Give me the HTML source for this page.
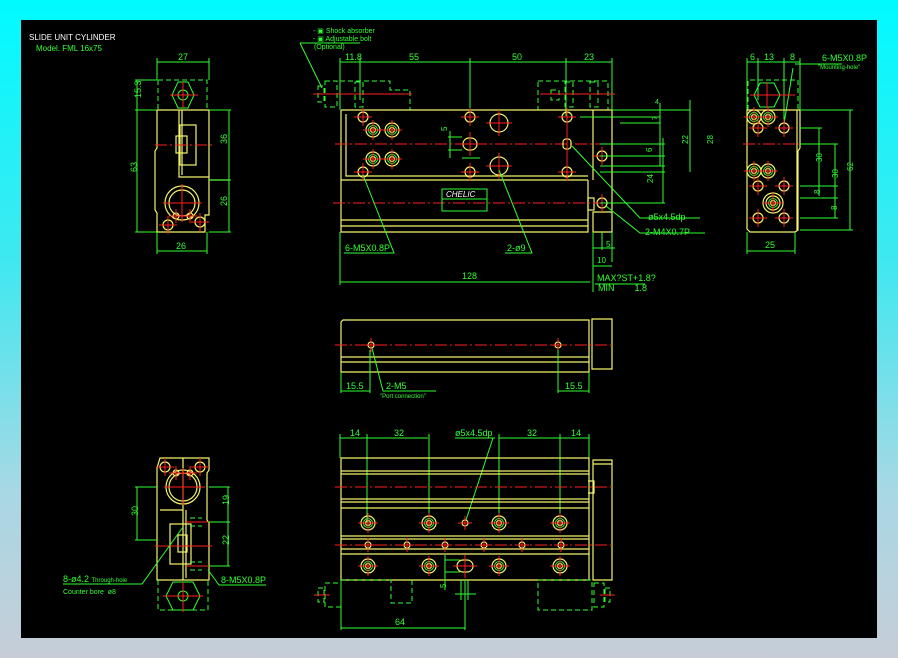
<!DOCTYPE html>
<html><head><meta charset="utf-8"><style>
html,body{margin:0;padding:0;}
body{width:898px;height:658px;overflow:hidden;background:linear-gradient(180deg,#00fbff 0%,#40e8f0 40%,#a8d8e4 75%,#c6cdd8 100%);position:relative;font-family:"Liberation Sans",sans-serif;}
#cad{position:absolute;left:21px;top:20px;width:856px;height:618px;background:#000;}
svg{position:absolute;left:0;top:0;}
text{font-family:"Liberation Sans",sans-serif;font-size:9px;fill:#30ff30;}
.y{stroke:#f4f46c;fill:none;stroke-width:1.2}
.g{stroke:#30ff30;fill:none;stroke-width:1}
.d{stroke:#30ff30;fill:none;stroke-width:1;stroke-dasharray:5 3}
.r{stroke:#ff2020;fill:none;stroke-width:1;stroke-dasharray:12 3 2 3}
.rs{stroke:#ff2020;fill:none;stroke-width:1}
</style></head><body>
<div id="cad"></div>
<svg width="898" height="658" viewBox="0 0 898 658">
<defs>
<g id="hA"><circle r="7" class="y"/><circle r="4.5" class="g" stroke-width="1.5"/><circle r="2.5" class="y"/><path class="rs" d="M-10 0H10M0-10V10"/></g>
<g id="hB"><circle r="5" class="y"/><path class="rs" d="M-9 0H9M0-9V9"/></g>
<g id="hS"><circle r="3" class="y"/><path class="rs" d="M-7 0H7M0-7V7"/></g>
<g id="hL"><circle r="9" class="y"/><path class="rs" d="M-13 0H13M0-13V13"/></g>
</defs>

<!-- title -->
<text x="29" y="40" style="fill:#fff;font-size:8px">SLIDE UNIT CYLINDER</text>
<text x="36" y="51" style="font-size:8px">Model. FML 16x75</text>

<!-- ===== Top-left side view ===== -->
<path class="g" d="M157 62H209M157 58V80M209 58V80"/><text x="178" y="60">27</text>
<path class="g" d="M135 80H157M135 110H157M135 232H157M137 80V232"/>
<text x="134" y="105" transform="rotate(-90 134 98)">15.3</text>
<text x="134" y="175" transform="rotate(-90 134 172)">63</text>
<path class="d" d="M158 80H207V110M158 80V110"/>
<path class="g" d="M172 95l6-13h10l6 13-6 13h-10z"/><circle cx="183" cy="95" r="5" class="g"/>
<path class="rs" d="M170 95H198M183 82V108"/>
<path class="y" d="M157 110H209V180H229M157 110V148l-2 3V210l2 3V232H205V215h4V180"/>
<path class="y" d="M179 110V177H209M182 110V175"/>
<rect x="180" y="125" width="16" height="40" class="y"/><rect x="176" y="136" width="11" height="17" class="y"/>
<path class="r" d="M155 145H212"/>
<circle cx="182" cy="203" r="17" class="y"/><circle cx="182" cy="203" r="13" class="y"/>
<path class="rs" d="M163 203H202M182 184V222"/>
<use href="#hS" x="176" y="216"/><use href="#hS" x="190" y="216"/><use href="#hB" x="168" y="225"/><use href="#hB" x="200" y="222"/>
<path class="g" d="M209 110H231M209 180H231M209 232H231M229 110V232"/>
<text x="224" y="147" transform="rotate(-90 224 144)">36</text>
<text x="224" y="209" transform="rotate(-90 224 206)">26</text>
<path class="g" d="M157 232V254M207 232V254M157 251H207"/><text x="176" y="249">26</text>

<!-- ===== Top main view ===== -->
<text x="313" y="33" style="font-size:7px">- ▣ Shock absorber</text>
<text x="313" y="41" style="font-size:7px">- ▣ Adjustable bolt</text>
<text x="314" y="49" style="font-size:7px">(Optional)</text>
<path class="g" d="M300 43H360M300 43L322 88"/>
<path class="g" d="M340 62H612M340 58V110M360 58V100M470 58V116M566 58V116M612 58V110"/>
<text x="345" y="60">11.8</text><text x="409" y="60">55</text><text x="512" y="60">50</text><text x="584" y="60">23</text>
<path class="d" d="M318 86h6v16h-6zM325 81h12v26h-12zM340 81h50v9h20v20h-20M355 82h8v25h-8zM538 81h70v29h-70z M551 90h8v10h-8z M565 82h8v25h-8zM590 82h8v25h-8z"/>
<path class="rs" d="M313 94H412M540 94H615"/>
<path class="y" d="M341 110H612V210M341 110V180H588M341 180V232H588V180M593 110V180M346 114V176H588M341 220H588M341 226H588M593 212H612V232H593z"/>
<rect x="588" y="198" width="6" height="12" class="y"/>
<path class="r" d="M335 144H615M333 203H616"/>
<use href="#hB" x="363" y="117"/><use href="#hA" x="373" y="130"/><use href="#hA" x="392" y="130"/>
<use href="#hA" x="373" y="159"/><use href="#hA" x="392" y="159"/><use href="#hB" x="363" y="172"/>
<use href="#hB" x="470" y="117"/><use href="#hB" x="470" y="172"/>
<rect x="463" y="138" width="14" height="12" rx="6" class="y"/><path class="rs" d="M470 132V156M459 144H481"/>
<use href="#hL" x="499" y="123"/><use href="#hL" x="499" y="166"/>
<use href="#hB" x="567" y="117"/><use href="#hB" x="567" y="172"/><rect x="563" y="139" width="8" height="10" rx="3" class="y"/>
<path class="rs" d="M567 125V164"/>
<use href="#hB" x="602" y="156"/><use href="#hB" x="602" y="203"/>
<path class="g" d="M450 131V158M448 137H462M448 150H462M462 158H480"/><text x="444" y="134" transform="rotate(-90 444 131)" style="font-size:8px">5</text>
<rect x="442" y="189" width="45" height="22" class="g"/><path class="g" d="M442 199H487"/>
<text x="446" y="197" style="fill:#fff;font-style:italic;font-size:8px">CHELIC</text>
<path class="g" d="M580 117H660M620 123H660M600 144H665M600 156H665M600 166H665M600 172H665M600 203H665M612 110H690M660 103V166M690 100V172M663 138V203"/>
<text x="655" y="104" style="font-size:7px">4</text><text x="655" y="122" transform="rotate(-90 655 120)" style="font-size:7px">7</text>
<text x="685" y="147" transform="rotate(-90 685 144)" style="font-size:8px">22</text>
<text x="710" y="147" transform="rotate(-90 710 144)" style="font-size:8px">28</text>
<text x="650" y="154" transform="rotate(-90 650 152)" style="font-size:8px">6</text>
<text x="650" y="186" transform="rotate(-90 650 183)" style="font-size:8px">24</text>
<path class="g" d="M572 146L640 218H700M606 206L640 233H705"/>
<text x="648" y="220">ø5x4.5dp</text><text x="645" y="235">2-M4X0.7P</text>
<path class="g" d="M363 175L394 253H344M499 170L532 253H505"/>
<text x="345" y="251">6-M5X0.8P</text><text x="507" y="251">2-ø9</text>
<path class="g" d="M593 232V292M612 232V262M602 232V250M593 248H615M593 266H612M340 232V285M340 282H590"/>
<text x="606" y="247" style="font-size:8px">5</text><text x="597" y="263" style="font-size:8px">10</text>
<text x="462" y="279">128</text>
<text x="597" y="281">MAX?ST+1.8?</text><text x="598" y="291">MIN&#160;&#160;&#160;&#160;&#160;&#160;&#160;&#160;1.8</text>
<path class="g" d="M595 284H645"/>

<!-- ===== Middle view ===== -->
<path class="y" d="M343 320H589V372H341V322zM341 357H589M341 362H589M592 319H612V369H592z"/>
<path class="r" d="M335 345H615"/>
<use href="#hS" x="371" y="345"/><use href="#hS" x="558" y="345"/>
<path class="g" d="M341 372V393M370 350V393M341 391H370M558 350V393M589 372V393M558 391H589"/>
<text x="346" y="389">15.5</text><text x="565" y="389">15.5</text>
<path class="g" d="M372 348L383 391H436"/>
<text x="386" y="389">2-M5</text><text x="380" y="398" style="font-size:6px">"Port connection"</text>

<!-- ===== Bottom view ===== -->
<path class="g" d="M340 438H428M340 434V458M367 434V523M429 434V523M499 438H589M499 434V523M560 434V523M589 434V458M455 438H495M493 438L466 520"/>
<text x="350" y="436">14</text><text x="394" y="436">32</text><text x="455" y="436">ø5x4.5dp</text><text x="527" y="436">32</text><text x="571" y="436">14</text>
<path class="y" d="M341 458H589V580H341zM341 471H589M341 474H589M341 499H589M341 502H589M341 508H589M341 536H589M341 539H589M341 549H589M341 554H589M593 460H612V580H593zM593 464H612M588 481H594V493H588"/>
<path class="r" d="M335 487H615M335 545H615"/>
<use href="#hA" x="368" y="523"/><use href="#hA" x="429" y="523"/><use href="#hS" x="465" y="523"/><use href="#hA" x="499" y="523"/><use href="#hA" x="560" y="523"/>
<use href="#hS" x="368" y="545"/><use href="#hS" x="407" y="545"/><use href="#hS" x="445" y="545"/><use href="#hS" x="484" y="545"/><use href="#hS" x="522" y="545"/><use href="#hS" x="561" y="545"/>
<use href="#hA" x="368" y="566"/><use href="#hA" x="429" y="566"/><use href="#hA" x="499" y="566"/><use href="#hA" x="560" y="566"/>
<rect x="457" y="560" width="16" height="12" rx="6" class="y"/><path class="rs" d="M465 555V578M453 566H477"/>
<path class="g" d="M445 555V590M445 560H460M445 572H460M461 580V600M468 580V600M455 594H476M465 580V630"/>
<text x="443" y="591" transform="rotate(-90 443 588)" style="font-size:8px">5</text>
<path class="d" d="M318 588h6v14h-6zM325 583h16v24h-16zM341 580h50v23h21v-23M538 580h54v30h-54zM594 583h10v24h-10zM605 588h5v14h-5z"/>
<path class="rs" d="M314 595H330M600 595H615"/>
<path class="g" d="M341 580V630M341 628H465"/><text x="395" y="625">64</text>

<!-- ===== Right side view ===== -->
<path class="g" d="M747 62H800M747 58V110M758 58V100M784 58V120M800 58V110M793 68L784 124M795 64H842"/>
<text x="750" y="60">6</text><text x="764" y="60">13</text><text x="790" y="60">8</text>
<text x="822" y="61">6-M5X0.8P</text><text x="818" y="69" style="font-size:6px">"Mounting-hole"</text>
<path class="d" d="M748 110V80H798V110"/><path class="g" d="M754 95l6-12h14l6 12-6 12h-14z"/><path class="rs" d="M750 95H795M767 82V108"/>
<path class="y" d="M747 110H800V148l-2 3V230l-3 2H750l-3-3zM797 110V230"/>
<path class="r" d="M743 144H802"/>
<use href="#hA" x="754" y="117"/><use href="#hA" x="768" y="117"/><use href="#hB" x="758" y="128"/><use href="#hB" x="784" y="128"/>
<use href="#hA" x="754" y="171"/><use href="#hA" x="768" y="171"/><use href="#hB" x="758" y="186"/><use href="#hB" x="784" y="186"/>
<circle cx="773" cy="203" r="10" class="y"/><use href="#hA" x="773" y="203"/><use href="#hB" x="758" y="218"/><use href="#hB" x="784" y="218"/>
<path class="g" d="M800 110H853M800 128H822M800 144H838M800 186H838M800 198H838M800 218H838M800 230H853M850 110V230M835 144V218M819 128V196"/>
<text x="818" y="166" transform="rotate(-90 818 162)" style="font-size:8px">30</text>
<text x="834" y="182" transform="rotate(-90 834 178)" style="font-size:8px">30</text>
<text x="849" y="175" transform="rotate(-90 849 171)" style="font-size:8px">62</text>
<text x="818" y="196" transform="rotate(-90 818 194)" style="font-size:8px">8</text>
<text x="834" y="213" transform="rotate(-90 834 210)" style="font-size:8px">8</text>
<path class="g" d="M747 232V254M795 232V254M747 251H795"/><text x="765" y="248">25</text>

<!-- ===== Bottom-left view ===== -->
<path class="y" d="M160 458H209V470l-2 3V520l2 3V580H157V468z M160 510H183V458M183 510V580M186 510V578"/>
<rect x="170" y="524" width="21" height="40" class="y"/><rect x="178" y="535" width="9" height="17" class="y"/>
<circle cx="183" cy="487" r="17" class="y"/><circle cx="183" cy="487" r="14" class="y"/>
<path class="rs" d="M164 487H205M183 468V505M155 546H212"/>
<use href="#hB" x="165" y="467"/><use href="#hB" x="200" y="467"/><use href="#hS" x="176" y="473"/><use href="#hS" x="190" y="473"/>
<path class="d" d="M190 518h12M190 526h12M190 562h12M190 570h12M158 580v30h50v-30"/>
<path class="rs" d="M186 522H212M186 566H212"/>
<path class="g" d="M166 596l7-14h20l7 14-7 14h-20z"/><circle cx="183" cy="596" r="5" class="g"/><path class="rs" d="M163 596H203M183 582V612"/>
<path class="g" d="M135 487H157M135 540H157M137 487V540M209 487H230M209 522H230M209 566H230M228 487V566"/>
<text x="134" y="520" transform="rotate(-90 134 516)">30</text>
<text x="226" y="508" transform="rotate(-90 226 505)">19</text>
<text x="226" y="548" transform="rotate(-90 226 545)">22</text>
<path class="g" d="M63 584H142L183 527M219 585H266M219 585L208 570"/>
<text x="63" y="582">8-ø4.2 <tspan style="font-size:6px">Through-hole</tspan></text>
<text x="63" y="594" style="font-size:7px">Counter bore&#160;&#160;ø8</text>
<text x="221" y="583">8-M5X0.8P</text>
</svg>
</body></html>
